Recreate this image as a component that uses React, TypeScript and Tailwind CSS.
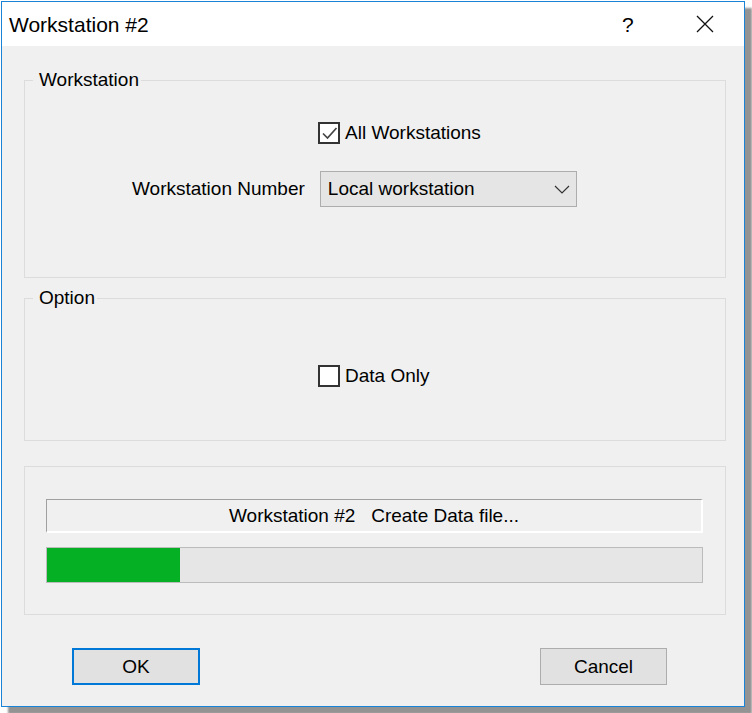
import type { ReactNode } from "react";

const font = "font-['Liberation_Sans','Arial',sans-serif]";

function CheckBox({ checked, label }: { checked?: boolean; label: string }) {
  return (
    <div className="flex items-center">
      <span className="flex h-[22px] w-[22px] items-center justify-center border-2 border-[#333333] bg-white">
        {checked ? (
          <svg width="17" height="17" viewBox="0 0 17 17" fill="none">
            <path d="M2 8.5 L6.5 13 L15.5 3" stroke="#444" strokeWidth="1.7" />
          </svg>
        ) : null}
      </span>
      <span className="ml-[5px] text-[19px] leading-[22px] text-black">{label}</span>
    </div>
  );
}

function GroupBox({
  title,
  className,
  children,
}: {
  title?: string;
  className: string;
  children: ReactNode;
}) {
  return (
    <div className={`relative ml-[22px] w-[702px] border border-[#dcdcdc] ${className}`}>
      {title ? (
        <span className="absolute -top-[12px] left-[8px] bg-[#f0f0f0] pl-[6px] pr-[2px] text-[19px] leading-[22px] text-black">
          {title}
        </span>
      ) : null}
      {children}
    </div>
  );
}

export default function App() {
  return (
    <div className={`h-[713px] w-[752px] bg-white pl-[1px] pt-[1px] ${font}`}>
      <div className="flex h-[706px] w-[744px] flex-col border border-[#1883d7] bg-[#f0f0f0] shadow-[7px_7px_2px_#939393]">
        {/* title bar */}
        <div className="flex h-[44px] shrink-0 items-center bg-white">
          <span className="ml-[7px] flex-1 text-[21px] leading-none text-black">Workstation #2</span>
          <span className="w-[12px] text-[21px] leading-none text-black">?</span>
          <svg className="ml-[62px] mr-[30px]" width="18" height="18" viewBox="0 0 18 18">
            <path d="M1 1 L17 17 M17 1 L1 17" stroke="#111" strokeWidth="1.3" />
          </svg>
        </div>

        <GroupBox title="Workstation" className="mt-[34px] h-[198px]">
          <div className="ml-[293px] mt-[41px]">
            <CheckBox checked label="All Workstations" />
          </div>
          <div className="mt-[27px] flex items-center">
            <span className="ml-[107px] text-[19px] leading-[22px] text-black">Workstation Number</span>
            <div className="ml-[15px] flex h-[36px] w-[257px] items-center justify-between border border-[#adadad] bg-[#e5e5e5] pl-[7px] pr-[6px]">
              <span className="text-[19px] leading-[22px] text-black">Local workstation</span>
              <svg width="16" height="9" viewBox="0 0 16 9" fill="none">
                <path d="M1 1 L8 8 L15 1" stroke="#333" strokeWidth="1.2" />
              </svg>
            </div>
          </div>
        </GroupBox>

        <GroupBox title="Option" className="mt-[20px] h-[143px]">
          <div className="ml-[293px] mt-[66px]">
            <CheckBox label="Data Only" />
          </div>
        </GroupBox>

        <GroupBox className="mt-[25px] h-[149px]">
          <div className="ml-[21px] mt-[32px] flex h-[34px] w-[657px] items-center justify-center border-l border-t border-b-2 border-r-2 border-l-[#a0a0a0] border-t-[#a0a0a0] border-b-white border-r-white">
            <span className="whitespace-pre text-[19px] leading-[22px] text-black">
              Workstation #2   Create Data file...
            </span>
          </div>
          <div className="ml-[21px] mt-[14px] flex h-[36px] w-[657px] border border-[#bcbcbc] bg-[#e6e6e6]">
            <div className="h-full w-[133px] bg-[#06b025]" />
          </div>
        </GroupBox>

        <div className="mt-[33px] flex">
          <button className="ml-[70px] flex h-[37px] w-[128px] items-center justify-center border-2 border-[#0078d7] bg-[#e1e1e1] text-[19px] leading-none text-black">
            OK
          </button>
          <button className="ml-[340px] flex h-[37px] w-[127px] items-center justify-center border border-[#adadad] bg-[#e1e1e1] text-[19px] leading-none text-black">
            Cancel
          </button>
        </div>
      </div>
    </div>
  );
}
